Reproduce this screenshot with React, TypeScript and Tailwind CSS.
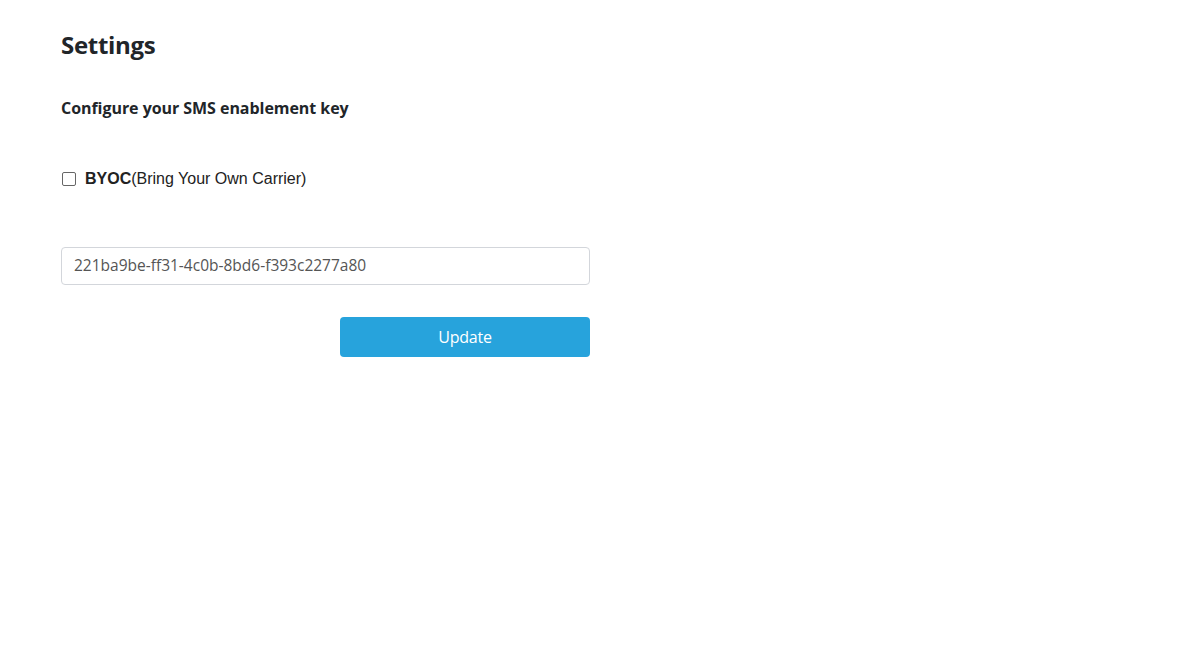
import React from "react";

export default function App() {
  return (
    <div className="min-h-[659px] w-full bg-white" style={{ fontFamily: '"Open Sans", sans-serif' }}>
      <div className="w-[529px] ml-[61px] pt-[28px] flex flex-col">
        <h1 className="text-[24px] leading-[34px] font-bold text-[#212529] tracking-[-0.3px]">Settings</h1>
        <h2 className="mt-[34px] text-[16px] leading-[24px] font-bold text-[#212529] tracking-[-0.05px]">
          Configure your SMS enablement key
        </h2>
        <label className="mt-[47px] flex items-center gap-[9px] h-[24px]" style={{ fontFamily: '"Liberation Sans", Arial, sans-serif' }}>
          <span className="ml-[1px] w-[14px] h-[14px] border-[1.5px] border-[#666] rounded-[2px] bg-white" />
          <span className="text-[16px] text-[#222]">
            <b className="font-bold text-[#222]">BYOC</b>(Bring Your Own Carrier)
          </span>
        </label>
        <div className="mt-[56px] h-[38px] border border-[#d3d6db] rounded-[4px] flex items-center px-[12px]">
          <span className="text-[15.5px] text-[#555]">221ba9be-ff31-4c0b-8bd6-f393c2277a80</span>
        </div>
        <div className="mt-[32px] flex justify-end">
          <button className="w-[250px] h-[40px] rounded-[4px] bg-[#27a3dc] text-white text-[16px] tracking-[-0.2px]">
            Update
          </button>
        </div>
      </div>
    </div>
  );
}
